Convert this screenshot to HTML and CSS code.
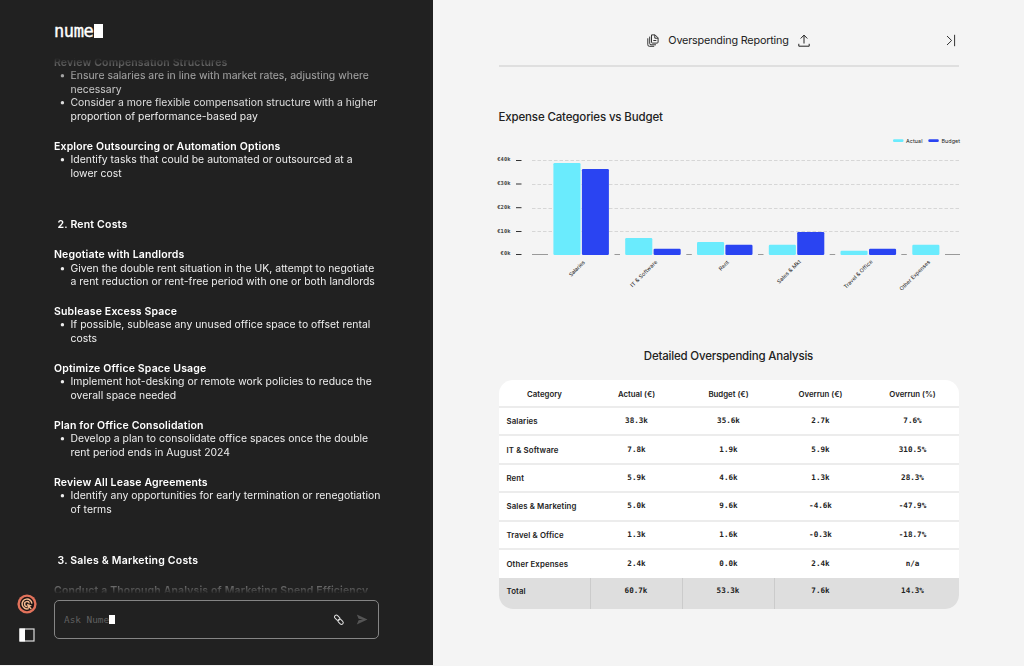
FILE: index.html
```
<!DOCTYPE html>
<html lang="en">
<head>
    <meta charset="UTF-8">
    <title>Nume - Overspending Reporting</title>
    <link rel="stylesheet" href="styles.css">
</head>
<body>
    <div class="app">
        <div class="chat-panel">
            <div class="logo"><span class="logo-text">nume</span><span class="logo-block"></span></div>

            <div class="messages">
                <h4>Review Compensation Structures</h4>
                <ul>
                    <li>Ensure salaries are in line with market rates, adjusting where<br>necessary</li>
                    <li>Consider a more flexible compensation structure with a higher<br>proportion of performance-based pay</li>
                </ul>
                <h4>Explore Outsourcing or Automation Options</h4>
                <ul>
                    <li>Identify tasks that could be automated or outsourced at a<br>lower cost</li>
                </ul>

                <h3>2. Rent Costs</h3>
                <h4>Negotiate with Landlords</h4>
                <ul>
                    <li>Given the double rent situation in the UK, attempt to negotiate<br>a rent reduction or rent-free period with one or both landlords</li>
                </ul>
                <h4>Sublease Excess Space</h4>
                <ul>
                    <li>If possible, sublease any unused office space to offset rental<br>costs</li>
                </ul>
                <h4>Optimize Office Space Usage</h4>
                <ul>
                    <li>Implement hot-desking or remote work policies to reduce the<br>overall space needed</li>
                </ul>
                <h4>Plan for Office Consolidation</h4>
                <ul>
                    <li>Develop a plan to consolidate office spaces once the double<br>rent period ends in August 2024</li>
                </ul>
                <h4>Review All Lease Agreements</h4>
                <ul>
                    <li>Identify any opportunities for early termination or renegotiation<br>of terms</li>
                </ul>

                <h3>3. Sales &amp; Marketing Costs</h3>
                <h4>Conduct a Thorough Analysis of Marketing Spend Efficiency</h4>
            </div>

            <div class="bottom-row">
                <div class="side-icons">
                    <svg width="20" height="20" viewBox="0 0 20 20">
                        <circle cx="10" cy="10" r="9.6" fill="#e2725b"/>
                        <circle cx="10" cy="10" r="7.2" fill="#1d1414"/>
                        <path d="M11.6 14.6A4.9 4.9 0 1 1 14.9 9.6M10 12.4A2.4 2.4 0 1 1 12.3 9.4" fill="none" stroke="#f3b98f" stroke-width="1.5"/>
                        <path d="M10 9.8l5 1.8-2 .9 1.8 1.9-1 1-1.9-2-.9 2z" fill="#f3b98f"/>
                    </svg>
                    <svg width="16" height="14" viewBox="0 0 16 14">
                        <rect x="1" y="1" width="14" height="12" fill="none" stroke="#ddd" stroke-width="1.2"/>
                        <rect x=".5" y=".5" width="5.5" height="13" fill="#fff"/>
                    </svg>
                </div>
                <div class="ask-box">
                    <span class="ask-text">Ask Nume</span><span class="cursor"></span>
                    <svg class="clip" width="12" height="12" viewBox="0 0 12 12" fill="none" stroke="#ddd" stroke-width="1">
                        <rect x="-3" y="-1.8" width="6" height="3.6" rx="1.8" transform="translate(4.2 3.8) rotate(45)"/>
                        <rect x="-3" y="-1.8" width="6" height="3.6" rx="1.8" transform="translate(7.6 7.8) rotate(45)"/>
                    </svg>
                    <svg class="send" width="12" height="11" viewBox="0 0 12 11">
                        <path d="M.8.5L11.5 5.5.8 10.5 2.6 6.2 7 5.5 2.6 4.8z" fill="#555"/>
                    </svg>
                </div>
            </div>
        </div>

        <div class="report">
            <div class="report-header">
                <svg width="12" height="13" viewBox="0 0 12 13" fill="none" stroke="#333" stroke-width="1">
                    <path d="M4.5.9h3.6l3 3v4.2a1 1 0 0 1-1 1H5.5a1 1 0 0 1-1-1zM7.8 1v3.2H11M6.3 6.5h3"/>
                    <path d="M2.7 2.6v6.9a1.3 1.3 0 0 0 1.3 1.3h5M.8 4.3v6.4A1.6 1.6 0 0 0 2.4 12.3h4.8"/>
                </svg>
                <span class="report-title">Overspending Reporting</span>
                <svg width="12" height="13" viewBox="0 0 12 13" fill="none" stroke="#222" stroke-width="1">
                    <path d="M6 9.5V1.2M2.7 4.5L6 1.1l3.3 3.4M.8 9.8v2.4h10.4V9.8"/>
                </svg>
                <svg class="collapse" width="10" height="13" viewBox="0 0 10 13" fill="none" stroke="#333" stroke-width="1">
                    <path d="M1 2l4.6 4.5L1 11M8.6.8v11.4"/>
                </svg>
            </div>

            <h2 class="chart-title">Expense Categories vs Budget</h2>
            <svg class="chart" width="466" height="160" viewBox="496 134 466 160">
                <!-- legend -->
                <rect x="893" y="139.2" width="10.5" height="2.8" rx="1.2" fill="#6aebfd"/>
                <text class="legend" x="906" y="142.6" textLength="16.5">Actual</text>
                <rect x="928.3" y="139.2" width="10.5" height="2.8" rx="1.2" fill="#2a44f2"/>
                <text class="legend" x="941.5" y="142.6" textLength="18.5">Budget</text>
                <!-- y axis -->
                <g class="axis">
                    <text x="497.3" y="161" textLength="13.2">€40k</text>
                    <text x="497.3" y="184.8" textLength="13.2">€30k</text>
                    <text x="497.3" y="208.8" textLength="13.2">€20k</text>
                    <text x="497.3" y="232.5" textLength="13.2">€10k</text>
                    <text x="500.5" y="255.3" textLength="10">€0k</text>
                </g>
                <path d="M516 160.5h5.5M516 184h5.5M516 207.7h5.5M516 231.5h5.5M516 254.5h5.5" stroke="#333"/>
                <path d="M532 160.5h428M532 184.5h428M532 208.5h428M532 231.5h428" stroke="#d6d6d6" stroke-dasharray="3.5 2"/>
                <path d="M532 254.5h16M614.5 254.5h5.5M686.3 254.5h5.5M758 254.5h5.5M829.7 254.5h5.5M901.3 254.5h5.5M945 254.5h15" stroke="#999"/>
                <!-- bars -->
                <g fill="#6aebfd">
                    <rect x="553.4" y="163" width="27.1" height="92" rx="1.2"/>
                    <rect x="625.2" y="238" width="27.1" height="17" rx="1.2"/>
                    <rect x="697" y="242" width="27.1" height="13" rx="1.2"/>
                    <rect x="768.8" y="244.8" width="27.1" height="10.2" rx="1.2"/>
                    <rect x="840.5" y="250.8" width="27.1" height="4.2" rx="1.2"/>
                    <rect x="912.3" y="244.8" width="27.1" height="10.2" rx="1.2"/>
                </g>
                <g fill="#2a44f2">
                    <rect x="581.9" y="169" width="27" height="86" rx="1.2"/>
                    <rect x="653.6" y="248.8" width="27.1" height="6.2" rx="1.2"/>
                    <rect x="725.4" y="244.8" width="27.1" height="10.2" rx="1.2"/>
                    <rect x="797.2" y="232" width="27.1" height="23" rx="1.2"/>
                    <rect x="869" y="248.8" width="27.1" height="6.2" rx="1.2"/>
                </g>
                <!-- x axis labels -->
                <g class="labels">
                    <text transform="translate(571.2 277) rotate(-45)" textLength="20">Salaries</text>
                    <text transform="translate(632.6 287.5) rotate(-45)" textLength="35.5">IT &amp; Software</text>
                    <text transform="translate(721 271) rotate(-45)" textLength="11.5">Rent</text>
                    <text transform="translate(779.3 284) rotate(-45)" textLength="31">Sales &amp; Mkt</text>
                    <text transform="translate(846 289) rotate(-45)" textLength="38">Travel &amp; Office</text>
                    <text transform="translate(901.8 291) rotate(-45)" textLength="40.5">Other Expenses</text>
                </g>
            </svg>

            <h2 class="table-title">Detailed Overspending Analysis</h2>
            <table class="report-table">
                <thead>
                    <tr><th>Category</th><th>Actual (€)</th><th>Budget (€)</th><th>Overrun (€)</th><th>Overrun (%)</th></tr>
                </thead>
                <tbody>
                    <tr><td>Salaries</td><td>38.3k</td><td>35.6k</td><td>2.7k</td><td>7.6%</td></tr>
                    <tr><td>IT &amp; Software</td><td>7.8k</td><td>1.9k</td><td>5.9k</td><td>310.5%</td></tr>
                    <tr><td>Rent</td><td>5.9k</td><td>4.6k</td><td>1.3k</td><td>28.3%</td></tr>
                    <tr><td>Sales &amp; Marketing</td><td>5.0k</td><td>9.6k</td><td>-4.6k</td><td>-47.9%</td></tr>
                    <tr><td>Travel &amp; Office</td><td>1.3k</td><td>1.6k</td><td>-0.3k</td><td>-18.7%</td></tr>
                    <tr><td>Other Expenses</td><td>2.4k</td><td>0.0k</td><td>2.4k</td><td>n/a</td></tr>
                </tbody>
                <tfoot>
                    <tr><td>Total</td><td>60.7k</td><td>53.3k</td><td>7.6k</td><td>14.3%</td></tr>
                </tfoot>
            </table>
        </div>
    </div>
</body>
</html>
```
FILE: styles.css
```
* {
    box-sizing: border-box;
}

body {
    margin: 0;
    background-color: #f4f4f4;
    font-family: Inter, "Liberation Sans", sans-serif;
    color: #222;
    overflow: hidden;
}

h2, h3, h4, ul {
    margin: 0;
    padding: 0;
}

.app {
    display: flex;
    height: 666px;
}

/* left side */
.chat-panel {
    width: 433px;
    height: 665px;
    background-color: #212121;
    color: #fff;
    display: flex;
    flex-direction: column;
    flex-shrink: 0;
}

.logo {
    display: flex;
    align-items: flex-start;
    height: 55.5px;
    padding: 24px 0 0 54px;
}

.logo-text {
    width: 39.5px;
    font-family: "DejaVu Sans Mono", monospace;
    font-size: 17px;
    letter-spacing: -0.4px;
    line-height: 15px;
    -webkit-text-stroke: 0.4px #fff;
}

.logo-block {
    width: 9.5px;
    height: 14px;
    background-color: #fff;
}

.messages {
    height: 537.5px;
    padding-left: 54px;
    overflow: hidden;
    white-space: nowrap;
    font-size: 10.4px;
    line-height: 13.6px;
    letter-spacing: 0.025px;
    -webkit-mask-image: linear-gradient(to bottom, transparent 2px, rgba(0,0,0,0.25) 8px, rgba(0,0,0,0.65) 20px, rgba(0,0,0,0.85) 38px, #000 60px, #000 516px, rgba(0,0,0,0.35) 530px, transparent 538px);
    mask-image: linear-gradient(to bottom, transparent 2px, rgba(0,0,0,0.25) 8px, rgba(0,0,0,0.65) 20px, rgba(0,0,0,0.85) 38px, #000 60px, #000 516px, rgba(0,0,0,0.35) 530px, transparent 538px);
}

.messages h3,
.messages h4 {
    font-size: 10.5px;
    font-weight: 600;
    letter-spacing: 0.15px;
}

.messages h3 {
    margin: 37.5px 0 16.4px 3.5px;
    letter-spacing: 0.2px;
}

.messages ul {
    list-style: none;
    padding-left: 16.5px;
}

.messages ul + h4 {
    margin-top: 16.2px;
}

.messages li {
    position: relative;
    color: #eee;
}

.messages li::before {
    content: "•";
    position: absolute;
    left: -11px;
}

.bottom-row {
    display: flex;
    padding: 7px 0 0 17px;
}

.side-icons {
    width: 20px;
    margin-right: 17px;
    display: flex;
    flex-direction: column;
    align-items: center;
    gap: 14px;
    margin-top: -6px;
}

.ask-box {
    width: 325px;
    height: 39px;
    border: 1px solid #858585;
    border-radius: 5px;
    display: flex;
    align-items: center;
    padding: 0 10px 0 9px;
}

.ask-text {
    font-family: "DejaVu Sans Mono", monospace;
    font-size: 9.4px;
    color: #606060;
}

.cursor {
    width: 6px;
    height: 9px;
    background-color: #fff;
}

.clip {
    margin-left: auto;
    margin-right: 11px;
}

/* right side */
.report {
    flex: 1;
    padding: 0 65px 0 65.5px;
    background-color: #f4f4f4;
}

.report-header {
    position: relative;
    display: flex;
    align-items: center;
    justify-content: center;
    gap: 9px;
    width: 460px;
    height: 67px;
    padding-top: 16px;
    border-bottom: 2px solid #dfdfdf;
}

.report-title {
    font-size: 10.8px;
    letter-spacing: -0.18px;
    white-space: nowrap;
}

.collapse {
    position: absolute;
    right: 3px;
    top: 34px;
}

.chart-title, .table-title {
    font-size: 11.5px;
    font-weight: 500;
    line-height: 16px;
    letter-spacing: -0.15px;
}

.chart-title {
    margin-top: 42px;
}

.chart {
    display: block;
    margin: 9px 0 0 -2.5px;
}

.legend, .labels {
    font-size: 5.4px;
    fill: #222;
}

.axis {
    font-family: "DejaVu Sans Mono", monospace;
    font-size: 5.4px;
    font-weight: bold;
    fill: #444;
}

.table-title {
    margin: 54px 0 16px;
    width: 460px;
    text-align: center;
    letter-spacing: -0.2px;
}

.report-table {
    width: 460px;
    table-layout: fixed;
    border-collapse: separate;
    border-spacing: 0;
    border-radius: 14px;
    overflow: hidden;
    background-color: #fff;
    font-size: 7.8px;
    line-height: 10px;
}

.report-table th {
    height: 28px;
    padding: 1px 0 0;
    font-weight: 600;
    border-bottom: 2px solid #ececec;
}

.report-table td {
    height: 28.4px;
    padding: 0;
    text-align: center;
    font-family: "DejaVu Sans Mono", monospace;
    font-size: 7.6px;
    font-weight: bold;
    border-bottom: 2px solid #ececec;
}

.report-table td:first-child {
    padding-left: 8px;
    text-align: left;
    font-family: Inter, sans-serif;
    font-size: 7.8px;
    font-weight: 600;
    letter-spacing: 0.13px;
    white-space: nowrap;
}

.report-table tbody tr:last-child td {
    border-bottom: none;
}

.report-table tfoot td {
    height: 31px;
    padding-bottom: 5px;
    background-color: #dedede;
    border-bottom: none;
}

.report-table tfoot td:nth-child(-n+3) {
    border-right: 1px solid #cbcbcb;
}
```
